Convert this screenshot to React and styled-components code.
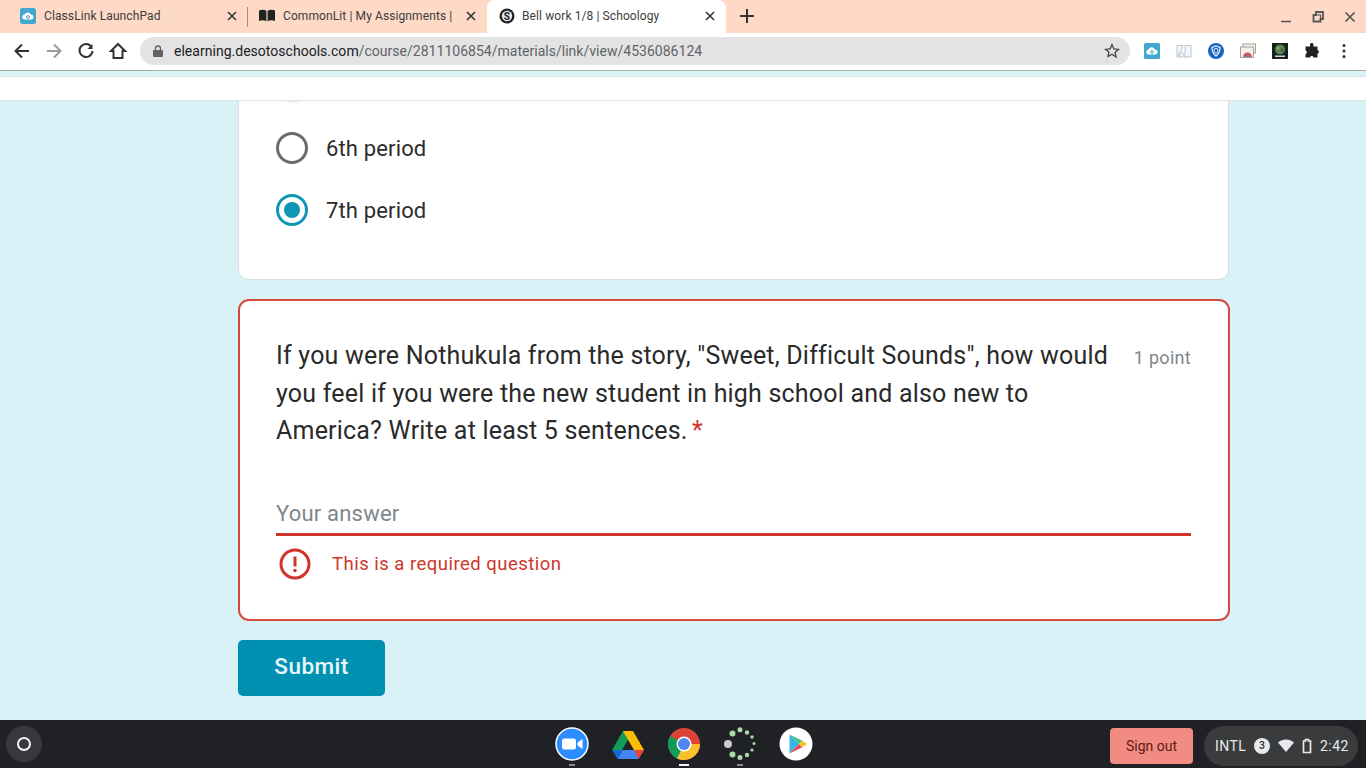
import React from "react";
import styled, { createGlobalStyle } from "styled-components";

const Global = createGlobalStyle`
  html, body { margin: 0; padding: 0; width: 1366px; height: 768px; overflow: hidden; }
  * { box-sizing: border-box; }
`;
const Screen = styled.div`
  width: 1366px; height: 768px; display: flex; flex-direction: column; overflow: hidden;
  font-family: Roboto, "Liberation Sans", sans-serif; background: #d9f2f8;
`;
const TabStrip = styled.div`
  height: 33px; flex: none; background: #fdd9c6; display: flex; align-items: stretch; padding-left: 8px;
`;
const Tab = styled.div`
  width: ${p => p.$w}px; height: 33px; flex: none; display: flex; align-items: center; position: relative;
  padding: 0 ${p => p.$pr || 8}px 2px ${p => p.$pl || 12}px; font-size: 12px; color: #3c3c3c; letter-spacing: 0.1px;
  background: ${p => (p.$active ? "#fff" : "transparent")};
  border-radius: ${p => (p.$active ? "8px 8px 0 0" : "0")};
  white-space: nowrap;
`;
const TabDivider = styled.div`
  width: 1px; height: 20px; background: #b08a78; align-self: center; flex: none;
`;
const TabIcon = styled.span`
  width: 16px; height: 16px; flex: none; display: flex;
`;
const TabTitle = styled.span`
  margin-left: ${p => p.$ml || 8}px; flex: 1; overflow: hidden; min-width: 0;
`;
const CloseGlyph = styled.svg`
  width: 10px; height: 10px; flex: none; stroke: #333; stroke-width: 1.6; fill: none;
`;
const NewTab = styled.svg`
  width: 14px; height: 14px; margin: 9px 0 0 14px; flex: none; stroke: #333; stroke-width: 2; fill: none;
`;
const WinControls = styled.div`
  margin-left: auto; display: flex; align-items: center; gap: 20px; padding-right: 10px;
`;
const Toolbar = styled.div`
  height: 38px; flex: none; background: #fff; border-bottom: 1px solid #a9a9a9;
  display: flex; align-items: center; padding: 0 0 1px 13px;
`;
const NavButton = styled.svg`
  width: 18px; height: 18px; margin-right: ${p => p.$mr}px; flex: none; fill: none;
  stroke: ${p => p.$c || "#333"}; stroke-width: 2;
`;
const Omnibox = styled.div`
  width: 990px; height: 28px; margin-left: 13px; background: #e3e3e3; border-radius: 14px; flex: none;
  display: flex; align-items: center; padding: 0 10px 0 13px; font-size: 14px; color: #5f6368; letter-spacing: 0.02px;
`;
const Host = styled.span` color: #202124; `;
const Url = styled.span` margin-left: 11px; flex: 1; white-space: nowrap; `;
const Extensions = styled.div`
  display: flex; align-items: center; gap: 16px; margin-left: 14px;
`;
const Ext = styled.svg` width: 16px; height: 16px; flex: none; `;
const InfoBar = styled.div`
  height: 25px; flex: none; background: #fff; border-top: 1px solid #dfe2e3; margin-top: 5px;
  border-bottom: 1px solid #dfe2e3;
`;
const Page = styled.div`
  flex: 1; min-height: 0; margin-left: 238px; width: 992px;
  display: flex; flex-direction: column;
`;
const Card = styled.section`
  width: 991px; background: #fff; border-radius: 0 0 10px 10px; border: 1px solid #dadce0; border-top: none;
  padding: 0 37px; height: 179px; flex: none; position: relative;
`;
const FadeMark = styled.div`
  position: absolute; left: 48px; top: 0; width: 12px; height: 2px; border-radius: 0 0 6px 6px; background: #f0f0f0;
`;
const Option = styled.div`
  display: flex; align-items: center; height: 32px; margin-top: ${p => p.$mt}px; font-size: 22px; color: #2c2c2c; letter-spacing: 0.15px;
`;
const Radio = styled.span`
  width: 32px; height: 32px; border-radius: 50%; flex: none; margin-right: 18px; background: #fff; position: relative;
  border: 3px solid ${p => (p.$on ? "#0f96b4" : "#6b6b6b")};
  display: flex; align-items: center; justify-content: center;
`;
const RadioDot = styled.span`
  width: 16px; height: 16px; border-radius: 50%; background: #0f96b4;
`;
const ErrorCard = styled.section`
  width: 992px; height: 322px; margin-top: 19px; flex: none; background: #fff;
  border: 2px solid #d5493f; border-radius: 11px; padding: 36px 37px 0 36px;
`;
const QuestionRow = styled.div` display: flex; justify-content: space-between; `;
const Question = styled.div`
  width: 850px; font-size: 25px; line-height: 37.5px; color: #2a2a2a; letter-spacing: 0.2px;
`;
const Asterisk = styled.span` color: #d0352b; margin-left: -2px; `;
const Points = styled.div`
  font-size: 18px; color: #80868b; line-height: 37px; padding-top: 2px; white-space: nowrap; letter-spacing: 0.3px;
`;
const AnswerField = styled.div`
  margin-top: 48px; height: 38px; border-bottom: 3px solid #d0352b; font-size: 22px; color: #80868b; line-height: 32px; letter-spacing: 0.2px;
  width: 915px;
`;
const ErrorRow = styled.div`
  display: flex; align-items: center; margin-top: 12px; color: #d0352b; font-size: 18.5px; letter-spacing: 0.48px;
`;
const ErrorIcon = styled.svg`
  width: 32px; height: 32px; margin: 0 21px 0 3px; flex: none; fill: none;
`;
const SubmitButton = styled.button`
  width: 147px; height: 56px; margin-top: 19px; flex: none; border: none; border-radius: 5px; background: #0090b2;
  color: #e8f7fa; font: 500 22.5px Roboto, "Liberation Sans", sans-serif; letter-spacing: 0.45px; padding: 0 0 5px;
`;
const Shelf = styled.footer`
  height: 48px; flex: none; background: #202124; display: grid; grid-template-columns: 1fr auto 1fr; align-items: center;
`;
const Launcher = styled.div`
  width: 36px; height: 36px; margin-left: 6px; border-radius: 50%; background: #37383b; display: flex; align-items: center; justify-content: center;
`;
const LauncherRing = styled.span`
  width: 14px; height: 14px; border-radius: 50%; border: 2px solid #f1f3f4;
`;
const Dock = styled.div` display: flex; gap: 24px; align-items: center; margin-left: 1px; `;
const DockItem = styled.div`
  width: 32px; height: 32px; position: relative; flex: none;
`;
const DockSvg = styled.svg` width: 34px; height: 34px; margin: -1px; display: block; `;
const RunDot = styled.span`
  position: absolute; left: 50%; bottom: -6px; height: 2px; width: ${p => (p.$active ? 10 : 6)}px; transform: translateX(-50%);
  background: ${p => (p.$active ? "#f1f3f4" : "#8a8b8d")};
`;
const ShelfRight = styled.div`
  display: flex; justify-content: flex-end; align-items: center; padding-right: 8px;
`;
const SignOut = styled.div`
  width: 83px; height: 36px; background: #f28b82; border-radius: 4px; color: #5e1a16; font-size: 14px;
  display: flex; align-items: center; justify-content: center; margin: 4px 11px 0 0;
`;
const Tray = styled.div`
  width: 154px; height: 40px; border-radius: 20px; background: #3a3b3d; color: #e8eaed; font-size: 14px; letter-spacing: 0.4px;
  display: flex; align-items: center; padding-left: 11px; margin-top: 3px;
`;
const Badge = styled.span`
  width: 16px; height: 16px; border-radius: 50%; background: #e8eaed; color: #333; font-size: 10.5px; font-weight: 500; margin-left: 8px; letter-spacing: 0;
  display: flex; align-items: center; justify-content: center;
`;
const TrayIcon = styled.svg` flex: none; margin-left: ${p => p.$ml}px; `;
const Clock = styled.span` margin-left: 8px; `;

const X = () => <CloseGlyph viewBox="0 0 10 10"><path d="M1 1l8 8M9 1l-8 8" /></CloseGlyph>;

export default function App() {
  return (
    <Screen>
      <Global />
      <TabStrip>
        <Tab $w={239} $pr={10}>
          <TabIcon><svg viewBox="0 0 16 16" width="16" height="16"><rect width="16" height="16" rx="2.500" fill="#3fa9cf" /><path d="M4 11.500a2.500 2.500 0 0 1 .6-4.900A3.400 3.400 0 0 1 11 6.700a2.400 2.400 0 0 1 .3 4.800z" fill="#fff" /><circle cx="8" cy="9" r="1.400" fill="none" stroke="#3fa9cf" /></svg></TabIcon>
          <TabTitle>ClassLink LaunchPad</TabTitle>
          <X />
        </Tab>
        <TabDivider />
        <Tab $w={239} $pl={11} $pr={11}>
          <TabIcon><svg viewBox="0 0 16 16" width="16" height="16"><path d="M0 2.500c2.500-1 5-1 7.400.3v10.400C5 12 2.500 12 0 13zM16 2.500c-2.500-1-5-1-7.400.3v10.400C11 12 13.500 12 16 13z" fill="#222" /></svg></TabIcon>
          <TabTitle $ml={8}>CommonLit | My Assignments | </TabTitle>
          <X />
        </Tab>
        <Tab $w={239} $active $pr={11}>
          <TabIcon><svg viewBox="0 0 16 16" width="16" height="16"><circle cx="8" cy="8" r="7.500" fill="#222" /><circle cx="8" cy="8" r="5.200" fill="#dfe8ee" /><text x="8" y="11.500" textAnchor="middle" fontSize="10" fontWeight="700" fontFamily="Roboto" fill="#222">S</text></svg></TabIcon>
          <TabTitle $ml={7}>Bell work 1/8 | Schoology</TabTitle>
          <X />
        </Tab>
        <NewTab viewBox="0 0 14 14"><path d="M7 0v14M0 7h14" /></NewTab>
        <WinControls>
          <svg width="12" height="12" viewBox="0 0 12 12"><path d="M1 10.500h10" stroke="#555" strokeWidth="1.500" /></svg>
          <svg width="12" height="12" viewBox="0 0 12 12"><path d="M4 1h7v7H8.500v2.500H1.500V4H4z" fill="none" stroke="#555" strokeWidth="1.800" /><path d="M4 4h4.500v4" fill="none" stroke="#555" strokeWidth="1.200" /></svg>
          <svg width="12" height="12" viewBox="0 0 12 12"><path d="M1.500 1.500l9 9M10.500 1.500l-9 9" stroke="#555" strokeWidth="1.700" /></svg>
        </WinControls>
      </TabStrip>
      <Toolbar>
        <NavButton $mr={14} viewBox="0 0 18 18"><path d="M16 9H3M9 2.500 2.500 9 9 15.500" /></NavButton>
        <NavButton $mr={14} $c="#9a9a9a" viewBox="0 0 18 18"><path d="M2 9h13M9 2.500 15.500 9 9 15.500" /></NavButton>
        <NavButton $mr={14} viewBox="0 0 18 18"><path d="M14.500 5A6.500 6.500 0 1 0 15.500 9" /><path d="M15.500 2v5h-5" fill="#333" stroke="none" /></NavButton>
        <NavButton $mr={0} viewBox="0 0 18 18"><path d="M9 2 2 9h2.500v7h9V9H16z" /></NavButton>
        <Omnibox>
          <svg width="10" height="12" viewBox="0 0 10 12"><rect y="5" width="10" height="7" rx="1" fill="#5f6368" /><path d="M2.500 5V3.500a2.500 2.500 0 0 1 5 0V5" fill="none" stroke="#5f6368" strokeWidth="1.300" /></svg>
          <Url><Host>elearning.desotoschools.com</Host>/course/2811106854/materials/link/view/4536086124</Url>
          <svg width="16" height="16" viewBox="0 0 16 16"><path d="M8 1.700l1.900 4.200 4.600.5-3.400 3.100.9 4.500L8 11.200l-4 2.300.9-4.500L1.500 6.400l4.600-.5z" fill="none" stroke="#444" strokeWidth="1.300" /></svg>
        </Omnibox>
        <Extensions>
          <Ext viewBox="0 0 16 16"><rect width="16" height="16" rx="1.500" fill="#3fa9cf" /><path d="M4 11.500a2.500 2.500 0 0 1 .5-4.900A3.400 3.400 0 0 1 11 6.700a2.400 2.400 0 0 1 .4 4.800z" fill="#fff" /><circle cx="8" cy="9" r="1.300" fill="none" stroke="#3fa9cf" /></Ext>
          <Ext viewBox="0 0 16 16"><path d="M1 2.500h6L4.500 9.500 3 14H1zM9 2.500h6V14H8l1-4z" fill="#f3f6f9" stroke="#b9c4d0" /><circle cx="5" cy="12" r="2.300" fill="none" stroke="#b9c4d0" /></Ext>
          <Ext viewBox="0 0 16 16"><circle cx="8" cy="8" r="8" fill="#1565c0" /><path d="M8 3l4 1.500c0 4-1.200 6.500-4 8.500-2.800-2-4-4.500-4-8.500z" fill="none" stroke="#e8f1fb" strokeWidth="1.200" /><path d="M8 5.500l2 .8c0 2-.6 3.300-2 4.300-1.400-1-2-2.300-2-4.300z" fill="none" stroke="#e8f1fb" /></Ext>
          <Ext viewBox="0 0 16 16"><rect x="3" y="1" width="12.500" height="9" fill="#f1efe9" stroke="#a8a196" /><rect x="0.500" y="4" width="13" height="10.500" fill="#f3f1ea" stroke="#a8a196" /><path d="M3 14a4.500 4.500 0 0 1 9 0z" fill="#d9544d" /><path d="M5.500 14a2 2 0 0 1 4 0z" fill="#5a86c9" /></Ext>
          <Ext viewBox="0 0 16 16"><rect width="16" height="16" fill="#17201c" /><circle cx="8" cy="6.500" r="5" fill="#5d8052" /><circle cx="6" cy="5" r="1.500" fill="#8ba97a" /><circle cx="10" cy="7" r="1.500" fill="#3e5c3a" /><rect x="3" y="12.500" width="10" height="1.500" fill="#cfd6cf" /></Ext>
          <Ext viewBox="0 0 16 16"><path d="M6 1.500a1.800 1.800 0 0 1 3.500 0V3.500H13.500V7a1.800 1.800 0 0 1 0 3.500V14.500H9.500a1.800 1.800 0 0 0-3.500 0H1.500V11a1.800 1.800 0 0 0 0-3.500V3.500H6z" fill="#222" /></Ext>
          <Ext viewBox="0 0 16 16"><circle cx="8" cy="2.500" r="1.500" fill="#333" /><circle cx="8" cy="8" r="1.500" fill="#333" /><circle cx="8" cy="13.500" r="1.500" fill="#333" /></Ext>
        </Extensions>
      </Toolbar>
      <InfoBar />
      <Page>
        <Card>
          <FadeMark />
          <Option $mt={31}><Radio /><span>6th period</span></Option>
          <Option $mt={30}><Radio $on><RadioDot /></Radio><span>7th period</span></Option>
        </Card>
        <ErrorCard>
          <QuestionRow>
            <Question>If you were Nothukula from the story, "Sweet, Difficult Sounds", how would you feel if you were the new student in high school and also new to America? Write at least 5 sentences. <Asterisk>*</Asterisk></Question>
            <Points>1 point</Points>
          </QuestionRow>
          <AnswerField>Your answer</AnswerField>
          <ErrorRow>
            <ErrorIcon viewBox="0 0 32 32"><circle cx="16" cy="16" r="14" stroke="#d0352b" strokeWidth="3" /><path d="M16 8.500v10" stroke="#d0352b" strokeWidth="3" /><circle cx="16" cy="22.500" r="1.800" fill="#d0352b" /></ErrorIcon>
            <span>This is a required question</span>
          </ErrorRow>
        </ErrorCard>
        <SubmitButton>Submit</SubmitButton>
      </Page>
      <Shelf>
        <Launcher><LauncherRing /></Launcher>
        <Dock>
          <DockItem>
            <DockSvg viewBox="0 0 34 34"><circle cx="17" cy="17" r="16" fill="#2d8cff" stroke="#fff" strokeWidth="1.500" /><rect x="7" y="11.500" width="14" height="11" rx="2.500" fill="#fff" /><path d="M22.500 15.500l5-3.500v10l-5-3.500z" fill="#fff" /></DockSvg>
            <RunDot />
          </DockItem>
          <DockItem>
            <DockSvg viewBox="0 0 34 34"><path d="M12 3h10L11 22H1z" fill="#0f9d58" transform="translate(0 1)" /><path d="M12 4h10l11 19H23z" fill="#fbbc04" /><path d="M33 23l-5.500 9H6.500L11.500 23z" fill="#4285f4" /><path d="M1 23l5.500 9 5-9z" fill="#1967d2" /><path d="M27.500 32l5.500-9H23z" fill="#ea4335" /></DockSvg>
          </DockItem>
          <DockItem>
            <DockSvg viewBox="0 0 34 34"><circle cx="17" cy="17" r="16" fill="#db4437" /><path d="M17 17 3.100 25A16 16 0 0 1 3.100 9z" fill="#0f9d58" /><path d="M3.100 25 17 17l8 0 4.800-.0L17 33A16 16 0 0 1 3.100 25z" fill="#0f9d58" /><path d="M17 17h16A16 16 0 0 1 10 31.400z" fill="#fbc02d" /><circle cx="17" cy="17" r="7.500" fill="#fff" /><circle cx="17" cy="17" r="6" fill="#4f86ec" /></DockSvg>
            <RunDot $active />
          </DockItem>
          <DockItem>
            <DockSvg viewBox="0 0 34 34">
              <circle cx="5" cy="17" r="4" fill="#c9cccb" />
              <circle cx="9.500" cy="6.500" r="3" fill="#a8dba8" /><circle cx="17" cy="2.800" r="2.500" fill="#a8dba8" /><circle cx="24" cy="5.500" r="2.200" fill="#a8dba8" /><circle cx="29" cy="10" r="1.700" fill="#a8dba8" /><circle cx="31" cy="16.500" r="1.500" fill="#a8dba8" /><circle cx="29" cy="23" r="1.600" fill="#a8dba8" /><circle cx="24" cy="28" r="2.200" fill="#a8dba8" /><circle cx="17" cy="30.500" r="2.500" fill="#a8dba8" /><circle cx="9.500" cy="27.500" r="3" fill="#a8dba8" />
            </DockSvg>
            <RunDot />
          </DockItem>
          <DockItem>
            <DockSvg viewBox="0 0 34 34"><circle cx="17" cy="17" r="16.500" fill="#fff" /><path d="M10.500 7.500v19L20 17z" fill="#35b6e8" /><path d="M10.500 7.500 20 17l3.300-3.300z" fill="#3dc37a" /><path d="M10.500 26.500 20 17l3.300 3.300z" fill="#e9484f" /><path d="M23.300 13.700 20 17l3.300 3.300L28 17z" fill="#fbc02d" /></DockSvg>
          </DockItem>
        </Dock>
        <ShelfRight>
          <SignOut>Sign out</SignOut>
          <Tray>
            INTL
            <Badge>3</Badge>
            <TrayIcon $ml={8} width="16" height="14" viewBox="0 0 16 14"><path d="M0 3.500C4.500-.5 11.500-.5 16 3.500L8 13z" fill="#e8eaed" /></TrayIcon>
            <TrayIcon $ml={8} width="10" height="16" viewBox="0 0 10 16"><path d="M3.500 1.500h3v1.500H8.500V14.500H1.500V3h2z" fill="none" stroke="#e8eaed" strokeWidth="1.700" /></TrayIcon>
            <Clock>2:42</Clock>
          </Tray>
        </ShelfRight>
      </Shelf>
    </Screen>
  );
}
